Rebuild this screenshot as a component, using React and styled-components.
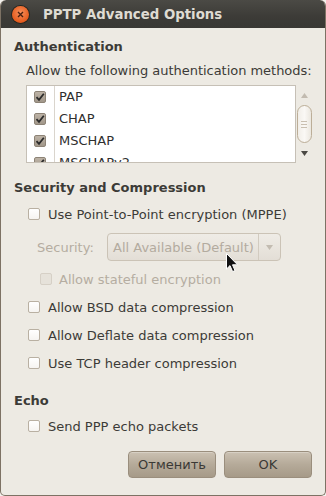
import styled, { createGlobalStyle } from "styled-components";

const GlobalStyle = createGlobalStyle`
  html, body {
    margin: 0;
    padding: 0;
    background: #f4f2ee;
  }
  * {
    box-sizing: border-box;
  }
`;

const Window = styled.div`
  position: relative;
  width: 326px;
  height: 496px;
  display: flex;
  flex-direction: column;
  background: #edeae3;
  border: 1px solid #7d7264;
  border-top: none;
  border-radius: 6px 6px 5px 5px;
  overflow: hidden;
  font-family: "DejaVu Sans", "Liberation Sans", sans-serif;
  font-size: 13px;
  color: #3c3b37;
`;

const TitleBar = styled.div`
  height: 28px;
  margin: 0 -1px;
  display: flex;
  align-items: center;
  padding-left: 12px;
  background: linear-gradient(#4b4a45, #3c3b37 60%, #393834);
  border-radius: 6px 6px 0 0;
`;

const CloseButton = styled.div`
  width: 17px;
  height: 17px;
  border-radius: 50%;
  background: radial-gradient(circle at 50% 40%, #f7905c, #e55a1c 70%, #c8460f);
  box-shadow: 0 0 0 1px #26251f;
  display: flex;
  align-items: center;
  justify-content: center;
`;

const Title = styled.div`
  margin-left: 14px;
  font-weight: bold;
  font-size: 13.3px;
  color: #dfdbd2;
`;

const Body = styled.div`
  flex: 1;
  display: flex;
  flex-direction: column;
  padding: 10px 13px 0 13px;
`;

const Heading = styled.div`
  font-weight: bold;
  line-height: 18px;
  margin-top: ${(p) => p.$mt || 0}px;
`;

const Label = styled.div`
  line-height: 18px;
  padding-left: 12px;
  white-space: nowrap;
  letter-spacing: -0.03px;
  margin-top: ${(p) => p.$mt || 0}px;
`;

const ListArea = styled.div`
  display: flex;
  height: 78px;
  margin-top: 5px;
  padding-left: 12px;
`;

const ListBox = styled.div`
  flex: 1;
  background: #fff;
  border: 1px solid #c6c0b6;
  overflow: hidden;
`;

const ListRow = styled.div`
  display: flex;
  height: 22px;
`;

const CheckCell = styled.div`
  width: 28px;
  padding-left: 7px;
  display: flex;
  align-items: center;
  border-right: 1px solid #dad5cd;
`;

const RowText = styled.div`
  padding-left: 4px;
  line-height: 22px;
  color: #2f2f2f;
`;

const Scrollbar = styled.div`
  width: 16px;
  display: flex;
  flex-direction: column;
  align-items: center;
`;

const ArrowBox = styled.div`
  height: 20px;
  display: flex;
  align-items: center;
  justify-content: center;
`;

const Thumb = styled.div`
  width: 15px;
  height: 38px;
  border: 1px solid #bcae98;
  border-radius: 8px;
  background: linear-gradient(90deg, #f1eee8, #faf8f5 50%, #ebe7df);
  display: flex;
  flex-direction: column;
  align-items: center;
  justify-content: center;
  gap: 2px;
`;

const Grip = styled.div`
  width: 6px;
  height: 1px;
  background: #c9bfb0;
`;

const Spacer = styled.div`
  flex: 1;
`;

const Box = styled.div`
  width: 12px;
  height: 12px;
  border-radius: 2px;
  flex: none;
  display: flex;
  align-items: center;
  justify-content: center;
  border: 1px solid ${(p) => (p.$checked ? "#8d8376" : p.$disabled ? "#d6d0c6" : "#b9b0a2")};
  background: ${(p) =>
    p.$checked
      ? "linear-gradient(#bdb3a6, #a1978a)"
      : p.$disabled
      ? "#e6e2da"
      : "linear-gradient(#ffffff, #f6f4f1)"};
`;

const CheckRow = styled.div`
  display: flex;
  align-items: center;
  gap: ${(p) => p.$gap || 8}px;
  height: 22px;
  padding-left: ${(p) => p.$indent || 14}px;
  margin-top: ${(p) => p.$mt || 6}px;
  color: ${(p) => (p.$disabled ? "#b5ada1" : "#3c3b37")};
`;

const SecurityRow = styled.div`
  display: flex;
  align-items: center;
  height: 28px;
  margin-top: 8px;
  padding-left: 23px;
  color: #b5ada1;
`;

const SecurityLabel = styled.div`
  width: 70px;
`;

const Combo = styled.div`
  width: 174px;
  height: 28px;
  display: flex;
  align-items: center;
  border: 1px solid #cbc3b6;
  border-radius: 4px;
  background: linear-gradient(#efece6, #e3ded6);
`;

const ComboText = styled.div`
  flex: 1;
  padding-left: 5px;
  white-space: nowrap;
  color: #b3ab9f;
`;

const ComboArrow = styled.div`
  width: 22px;
  height: 26px;
  border-left: 1px solid #d2cbc0;
  display: flex;
  align-items: center;
  justify-content: center;
`;

const ButtonRow = styled.div`
  display: flex;
  justify-content: flex-end;
  gap: 8px;
  margin-top: 14px;
`;

const Button = styled.div`
  width: 88px;
  height: 27px;
  display: flex;
  align-items: center;
  justify-content: center;
  border: 1px solid #9a8e7d;
  border-radius: 4px;
  background: linear-gradient(#cbc1b2, #b5aa99 50%, #a69a88);
  color: #3a3935;
  box-shadow: inset 0 1px 0 rgba(255, 255, 255, 0.25);
`;

const Cursor = styled.svg`
  position: absolute;
  left: 225px;
  top: 253px;
`;

const Check = () => (
  <svg width="10" height="10" viewBox="0 0 10 10">
    <path d="M1.5 5.2 L4 7.8 L8.8 1.8" fill="none" stroke="#2b2b2b" strokeWidth="1.8" />
  </svg>
);

const CheckBox = ({ checked, disabled }) => (
  <Box $checked={checked} $disabled={disabled}>
    {checked && <Check />}
  </Box>
);

const methods = ["PAP", "CHAP", "MSCHAP", "MSCHAPv2"];

const compression = [
  "Allow BSD data compression",
  "Allow Deflate data compression",
  "Use TCP header compression",
];

export default function App() {
  return (
    <>
      <GlobalStyle />
      <Window>
        <TitleBar>
          <CloseButton>
            <svg width="7" height="7" viewBox="0 0 7 7">
              <path d="M1 1 L6 6 M6 1 L1 6" stroke="#4a2010" strokeWidth="1.4" />
            </svg>
          </CloseButton>
          <Title>PPTP Advanced Options</Title>
        </TitleBar>
        <Body>
          <Heading>Authentication</Heading>
          <Label $mt={6}>Allow the following authentication methods:</Label>
          <ListArea>
            <ListBox>
              {methods.map((m) => (
                <ListRow key={m}>
                  <CheckCell>
                    <CheckBox checked />
                  </CheckCell>
                  <RowText>{m}</RowText>
                </ListRow>
              ))}
            </ListBox>
            <Scrollbar>
              <ArrowBox>
                <svg width="7" height="5" viewBox="0 0 7 5">
                  <path d="M3.5 0 L7 5 L0 5 Z" fill="#c2bbb0" />
                </svg>
              </ArrowBox>
              <Thumb>
                <Grip />
                <Grip />
                <Grip />
              </Thumb>
              <Spacer />
              <ArrowBox>
                <svg width="7" height="5" viewBox="0 0 7 5">
                  <path d="M0 0 L7 0 L3.5 5 Z" fill="#4a4843" />
                </svg>
              </ArrowBox>
            </Scrollbar>
          </ListArea>

          <Heading $mt={16}>Security and Compression</Heading>
          <CheckRow>
            <CheckBox />
            Use Point-to-Point encryption (MPPE)
          </CheckRow>
          <SecurityRow>
            <SecurityLabel>Security:</SecurityLabel>
            <Combo>
              <ComboText>All Available (Default)</ComboText>
              <ComboArrow>
                <svg width="7" height="5" viewBox="0 0 7 5">
                  <path d="M0 0 L7 0 L3.5 5 Z" fill="#c3bcb1" />
                </svg>
              </ComboArrow>
            </Combo>
          </SecurityRow>
          <CheckRow $mt={7} $indent={26} $gap={7} $disabled>
            <CheckBox disabled />
            Allow stateful encryption
          </CheckRow>
          {compression.map((c) => (
            <CheckRow key={c}>
              <CheckBox />
              {c}
            </CheckRow>
          ))}

          <Heading $mt={18}>Echo</Heading>
          <CheckRow $mt={5}>
            <CheckBox />
            Send PPP echo packets
          </CheckRow>

          <ButtonRow>
            <Button>Отменить</Button>
            <Button>OK</Button>
          </ButtonRow>
        </Body>
        <Cursor width="13" height="20" viewBox="0 0 13 20">
          <path
            d="M0.5 0.5 L0.5 16 L4 12.6 L6.6 18.6 L9 17.6 L6.5 11.8 L11.5 11.8 Z"
            fill="#111"
            stroke="#fff"
            strokeWidth="1"
          />
        </Cursor>
      </Window>
    </>
  );
}
